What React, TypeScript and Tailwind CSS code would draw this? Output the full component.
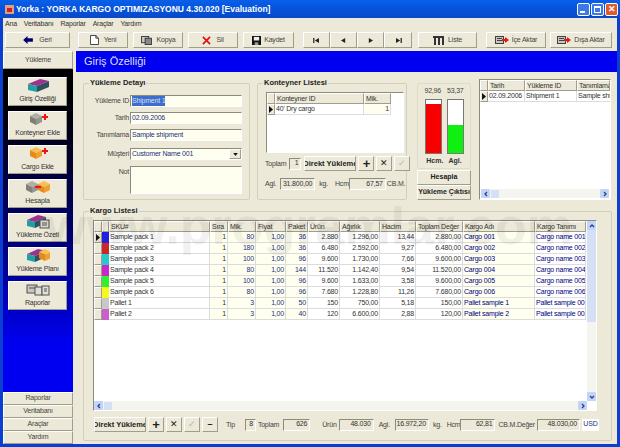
import type { ReactNode } from "react";

const raised =
  "border border-t-white border-l-white border-r-[#a09d8d] border-b-[#a09d8d] bg-[#ece9d8]";
const sunken =
  "border border-t-[#8d8b7a] border-l-[#8d8b7a] border-r-white border-b-white";

type Column = { title: string; width: number; align?: "right"; bg?: string; color?: string };

const cargoColumns: Column[] = [
  { title: "SKU#", width: 101, color: "text-[#333]" },
  { title: "Sıra", width: 18, align: "right", bg: "bg-[#fffff0]", color: "text-[#333]" },
  { title: "Mik.", width: 28, align: "right", bg: "bg-[#fffff0]", color: "text-[#223080]" },
  { title: "Fiyat", width: 30, align: "right", bg: "bg-[#fffff0]", color: "text-[#223080]" },
  { title: "Paket", width: 22, align: "right", bg: "bg-[#fffff0]", color: "text-[#223080]" },
  { title: "Ürün", width: 32, align: "right", color: "text-[#333]" },
  { title: "Ağırlık", width: 40, align: "right", color: "text-[#333]" },
  { title: "Hacim", width: 36, align: "right", color: "text-[#333]" },
  { title: "Toplam Değer", width: 47, align: "right", color: "text-[#333]" },
  { title: "Kargo Adı", width: 72, bg: "bg-[#fffff0]", color: "text-[#000080]" },
  { title: "Kargo Tanımı", width: 51, color: "text-[#000080]" },
];

const cargoRows = [
  { color: "bg-[#2020e0]", cells: ["Sample pack 1", "1", "80", "1,00", "36", "2.880", "1.296,00", "13,44", "2.880,00", "Cargo 001", "Cargo name 001"] },
  { color: "bg-[#c82828]", cells: ["Sample pack 2", "1", "180", "1,00", "36", "6.480", "2.592,00", "9,27", "6.480,00", "Cargo 002", "Cargo name 002"] },
  { color: "bg-[#28c8c8]", cells: ["Sample pack 3", "1", "100", "1,00", "96", "9.600", "1.730,00", "7,66", "9.600,00", "Cargo 003", "Cargo name 003"] },
  { color: "bg-[#c828c8]", cells: ["Sample pack 4", "1", "80", "1,00", "144", "11.520", "1.142,40", "9,54", "11.520,00", "Cargo 004", "Cargo name 004"] },
  { color: "bg-[#30f030]", cells: ["Sample pack 5", "1", "100", "1,00", "96", "9.600", "1.633,00", "3,58", "9.600,00", "Cargo 005", "Cargo name 005"] },
  { color: "bg-[#f8f820]", cells: ["Sample pack 6", "1", "80", "1,00", "96", "7.680", "1.228,80", "11,26", "7.680,00", "Cargo 006", "Cargo name 006"] },
  { color: "bg-[#c8c8c8]", cells: ["Pallet 1", "1", "3", "1,00", "50", "150", "750,00", "5,18", "150,00", "Pallet sample 1", "Pallet sample 001"] },
  { color: "bg-[#c860c8]", cells: ["Pallet 2", "1", "3", "1,00", "40", "120", "6.600,00", "2,88", "120,00", "Pallet sample 2", "Pallet sample 002"] },
];

function Box({ top, left, right, x = 0 }: { top: string; left: string; right: string; x?: number }) {
  return (
    <g transform={`translate(${x} 0)`}>
      <path d="M1 4 L7 1 L13 4 L7 7 Z" fill={top} />
      <path d="M1 4 L7 7 L7 13 L1 10 Z" fill={left} />
      <path d="M7 7 L13 4 L13 10 L7 13 Z" fill={right} />
    </g>
  );
}

function NavIcon({ kind }: { kind: string }) {
  const cls = "h-[15px] w-[24px]";
  if (kind === "giris")
    return (
      <svg viewBox="0 0 24 15" className={cls}>
        <path d="M2 6 L14 1 L23 3 L11 8 Z" fill="#a03090" />
        <path d="M2 6 L11 8 L11 14 L2 12 Z" fill="#20a0a0" />
        <path d="M11 8 L23 3 L23 9 L11 14 Z" fill="#305060" />
      </svg>
    );
  if (kind === "konteyner")
    return (
      <svg viewBox="0 0 24 15" className={cls}>
        <Box top="#b0b0a8" left="#808078" right="#949490" x={3} />
        <path d="M16 5 H22 M19 2 V8" stroke="#e81818" strokeWidth="2" />
      </svg>
    );
  if (kind === "cargo")
    return (
      <svg viewBox="0 0 24 15" className={cls}>
        <Box top="#f8c050" left="#e88820" right="#f0a030" x={3} />
        <path d="M16 5 H22 M19 2 V8" stroke="#e81818" strokeWidth="2" />
      </svg>
    );
  if (kind === "hesapla")
    return (
      <svg viewBox="0 0 24 15" className={cls}>
        <Box top="#b0b0a8" left="#808078" right="#949490" x={-1} />
        <Box top="#f8c050" left="#e88820" right="#f0a030" x={11} />
        <path d="M9 7 H15" stroke="#e81818" strokeWidth="2" />
      </svg>
    );
  if (kind === "ozet")
    return (
      <svg viewBox="0 0 24 15" className={cls}>
        <path d="M1 6 L12 1 L20 3 L9 8 Z" fill="#a03090" />
        <path d="M1 6 L9 8 L9 14 L1 12 Z" fill="#20a0a0" />
        <path d="M9 8 L20 3 L20 9 L9 14 Z" fill="#305060" />
        <rect x="14" y="6" width="9" height="8" fill="#d8d8d0" stroke="#505050" />
        <path d="M16 9 H21 M16 11 H21" stroke="#505050" />
      </svg>
    );
  if (kind === "plan")
    return (
      <svg viewBox="0 0 24 15" className={cls}>
        <path d="M1 6 L12 1 L20 3 L9 8 Z" fill="#a03090" />
        <path d="M1 6 L9 8 L9 14 L1 12 Z" fill="#20a0a0" />
        <path d="M9 8 L20 3 L20 9 L9 14 Z" fill="#305060" />
        <Box top="#f8c050" left="#e88820" right="#f0a030" x={12} />
      </svg>
    );
  return (
    <svg viewBox="0 0 24 15" className={cls}>
      <rect x="1" y="3" width="10" height="8" fill="#c8c8c0" stroke="#505050" />
      <rect x="9" y="5" width="7" height="8" fill="#e0e0d8" stroke="#505050" />
      <rect x="16" y="4" width="7" height="9" fill="#e0e0d8" stroke="#505050" />
      <path d="M3 6 H9 M18 7 H21 M18 9 H21" stroke="#505050" />
    </svg>
  );
}

function ExportIcon() {
  return (
    <svg viewBox="0 0 14 10" className="h-[10px] w-[14px]">
      <rect x="0.5" y="1.5" width="8" height="7" fill="#c8c8c0" stroke="#404040" />
      <path d="M2 3.5 H7 M2 5.5 H7" stroke="#404040" />
      <path d="M7 4 H10 V2 L14 5 L10 8 V6 H7 Z" fill="#e01818" />
    </svg>
  );
}

function ToolButton({ width, icon, label }: { width: number; icon: ReactNode; label?: string }) {
  return (
    <button
      type="button"
      style={{ width }}
      className={`${raised} flex h-[16px] items-center justify-center gap-[3px] text-[7px] text-[#444]`}
    >
      {icon}
      {label}
    </button>
  );
}

function NavGlyph({ d }: { d: string }) {
  return (
    <svg viewBox="0 0 8 6" className="h-[5px] w-[7px]">
      <path d={d} fill="#222" />
    </svg>
  );
}

function Toolbar() {
  return (
    <div className="flex h-[21px] items-start pl-[2px] pt-[2px]">
      <ToolButton
        width={65}
        label="Geri"
        icon={
          <svg viewBox="0 0 11 9" className="mr-[3px] h-[8px] w-[10px]">
            <path d="M0 4.5 L5 0 V2.5 H11 V6.5 H5 V9 Z" fill="#000070" />
          </svg>
        }
      />
      <div className="ml-[8px] flex gap-[5px]">
        <ToolButton
          width={50}
          label="Yeni"
          icon={
            <svg viewBox="0 0 10 11" className="mr-[2px] h-[10px] w-[9px]">
              <path d="M0.5 0.5 H6.5 L9.5 3.5 V10.5 H0.5 Z M6.5 0.5 V3.5 H9.5" fill="#fff" stroke="#333" />
            </svg>
          }
        />
        <ToolButton
          width={50}
          label="Kopya"
          icon={
            <svg viewBox="0 0 12 10" className="mr-[2px] h-[9px] w-[11px]">
              <rect x="0.5" y="0.5" width="8" height="7" fill="#c8c8c0" stroke="#333" />
              <rect x="4.5" y="2.5" width="7" height="7" fill="#888" stroke="#333" />
            </svg>
          }
        />
        <ToolButton
          width={50}
          label="Sil"
          icon={
            <svg viewBox="0 0 10 10" className="mr-[2px] h-[9px] w-[9px]">
              <path d="M1 1 L9 9 M9 1 L1 9" stroke="#e01010" strokeWidth="1.8" />
            </svg>
          }
        />
        <ToolButton
          width={51}
          label="Kaydet"
          icon={
            <svg viewBox="0 0 10 10" className="h-[9px] w-[9px]">
              <path d="M0 0 H10 V10 H0 Z" fill="#111" />
              <rect x="2" y="1" width="6" height="4" fill="#eee" />
              <rect x="3" y="7" width="4" height="3" fill="#999" />
            </svg>
          }
        />
      </div>
      <div className="ml-[9px] flex">
        <ToolButton width={27} icon={<NavGlyph d="M0 0 H1.5 V6 H0 Z M7 0 V6 L2 3 Z" />} />
        <ToolButton width={27} icon={<NavGlyph d="M6 0 V6 L1 3 Z" />} />
        <ToolButton width={27} icon={<NavGlyph d="M2 0 V6 L7 3 Z" />} />
        <ToolButton width={28} icon={<NavGlyph d="M1 0 V6 L6 3 Z M6.5 0 H8 V6 H6.5 Z" />} />
      </div>
      <div className="ml-[6px]">
        <ToolButton
          width={59}
          label="Liste"
          icon={
            <svg viewBox="0 0 11 9" className="mr-[1px] h-[9px] w-[11px]">
              <path d="M0 0 H11 V2 H0 Z M1 2 H3 V9 H1 Z M5 2 H7 V9 H5 Z M9 2 H11 V9 H9 Z" fill="#333" />
            </svg>
          }
        />
      </div>
      <div className="ml-[9px]">
        <ToolButton width={60} label="İçe Aktar" icon={<ExportIcon />} />
      </div>
      <div className="ml-[4px]">
        <ToolButton width={62} label="Dışa Aktar" icon={<ExportIcon />} />
      </div>
    </div>
  );
}

function Sidebar() {
  const items = [
    { kind: "giris", label: "Giriş Özelliği" },
    { kind: "konteyner", label: "Konteyner Ekle" },
    { kind: "cargo", label: "Cargo Ekle" },
    { kind: "hesapla", label: "Hesapla" },
    { kind: "ozet", label: "Yükleme Özeti" },
    { kind: "plan", label: "Yükleme Planı" },
    { kind: "raporlar", label: "Raporlar" },
  ];
  return (
    <div className="flex w-[70px] shrink-0 flex-col">
      <div className={`${raised} flex h-[18px] items-center justify-center text-[7px] text-[#444]`}>Yükleme</div>
      <div className="flex flex-1 flex-col gap-[5px] bg-gradient-to-b from-black via-[#000090] via-60% to-[#0000f0] to-85% pl-[5px] pt-[8px]">
        {items.map((item) => (
          <button
            key={item.kind}
            type="button"
            className={`${raised} flex h-[29px] w-[59px] flex-col items-center justify-between pb-[1px] text-[7px] leading-[10px] text-[#333]`}
          >
            <NavIcon kind={item.kind} />
            {item.label}
          </button>
        ))}
      </div>
      {["Raporlar", "Veritabanı", "Araçlar", "Yardım"].map((label) => (
        <div key={label} className={`${raised} flex h-[13px] items-center justify-center text-[7px] text-[#444]`}>
          {label}
        </div>
      ))}
    </div>
  );
}

function Group({ title, className, children }: { title: string; className: string; children: ReactNode }) {
  return (
    <div className={`relative shrink-0 rounded-[2px] border border-[#d2cfbd] ${className}`}>
      <span className="absolute left-[5px] top-[-6px] bg-[#ece9d8] px-[1px] text-[7.5px] font-bold leading-[10px] tracking-normal text-[#222]">
        {title}
      </span>
      {children}
    </div>
  );
}

function Field({ label, value, height = 12, selected, combo, mt }: {
  label: string;
  value?: string;
  height?: number;
  selected?: boolean;
  combo?: boolean;
  mt: string;
}) {
  return (
    <div className={`flex ${mt}`}>
      <span className="w-[46px] pr-[1px] pt-[1px] text-right text-[7px] leading-[10px] text-[#444]">{label}</span>
      <div
        style={{ height }}
        className={`${sunken} flex w-[112px] items-center justify-between bg-[#fffff0] pl-[1px] text-[7px] text-[#223080]`}
      >
        {selected ? <span className="bg-[#3a6fd0] text-[#dde]">{value}</span> : <span>{value}</span>}
        {combo && (
          <span className={`${raised} flex h-[10px] w-[12px] items-center justify-center`}>
            <svg viewBox="0 0 6 4" className="h-[3px] w-[5px]">
              <path d="M0 0 H6 L3 4 Z" fill="#111" />
            </svg>
          </span>
        )}
      </div>
    </div>
  );
}

function SmallBtn({ children, muted }: { children: ReactNode; muted?: boolean }) {
  return (
    <button
      type="button"
      className={`${raised} flex h-[15px] w-[16px] items-center justify-center text-[9px] font-bold leading-none ${muted ? "text-[#c8c6b8]" : "text-[#222]"}`}
    >
      {children}
    </button>
  );
}

function ActionButtons({ width }: { width: number }) {
  return (
    <>
      <button
        type="button"
        style={{ width }}
        className={`${raised} flex h-[15px] items-center justify-center overflow-hidden whitespace-nowrap text-[7.5px] font-bold tracking-normal text-[#222]`}
      >
        Direkt Yükleme
      </button>
      <SmallBtn>
        <span className="text-[13px]">+</span>
      </SmallBtn>
      <SmallBtn>
        <span className="font-normal">✕</span>
      </SmallBtn>
      <SmallBtn muted>✓</SmallBtn>
    </>
  );
}

function ReadOut({ value, width, className = "" }: { value: string; width: number; className?: string }) {
  return (
    <div
      style={{ width }}
      className={`${sunken} flex h-[12px] shrink-0 items-center justify-end pr-[2px] text-[7px] text-[#333] ${className}`}
    >
      {value}
    </div>
  );
}

function Label({ children, className = "" }: { children: ReactNode; className?: string }) {
  return <span className={`shrink-0 text-[7px] leading-[10px] text-[#444] ${className}`}>{children}</span>;
}

function HeaderCell({ title, width }: { title: string; width: number }) {
  return (
    <div
      style={{ width }}
      className={`${raised} h-full shrink-0 overflow-hidden whitespace-nowrap border-r-[#666] border-b-[#444] pl-[1px] text-[7px] leading-[9px] text-[#333]`}
    >
      {title}
    </div>
  );
}

function Indicator({ active }: { active?: boolean }) {
  return (
    <div className={`${raised} flex h-full w-[8px] shrink-0 items-center justify-center`}>
      {active && (
        <svg viewBox="0 0 4 7" className="h-[7px] w-[4px]">
          <path d="M0 0 L4 3.5 L0 7 Z" fill="#111" />
        </svg>
      )}
    </div>
  );
}

function ScrollBtn({ d }: { d: string }) {
  return (
    <div className="flex h-[9px] w-[9px] shrink-0 items-center justify-center rounded-[1px] bg-[#c3d4f7]">
      <svg viewBox="0 0 6 6" className="h-[6px] w-[6px]">
        <path d={d} fill="none" stroke="#27408b" strokeWidth="1.3" />
      </svg>
    </div>
  );
}

function HScroll({ width }: { width: number }) {
  return (
    <div style={{ width }} className="flex h-[9px] items-center bg-[#f5f5f0]">
      <ScrollBtn d="M4 1 L2 3 L4 5" />
      <div className="ml-[1px] h-[8px] w-[8px] bg-[#d6e0f5]" />
      <div className="flex-1" />
      <ScrollBtn d="M2 1 L4 3 L2 5" />
    </div>
  );
}

function Details() {
  return (
    <Group title="Yükleme Detayı" className="mt-[4px] h-[117px] w-[167px]">
      <div className="pt-[1px]">
        <Field mt="mt-[10px]" label="Yükleme ID" value="Shipment 1" selected />
        <Field mt="mt-[5px]" label="Tarih" value="02.09.2006" />
        <Field mt="mt-[5px]" label="Tanımlama" value="Sample shipment" />
        <Field mt="mt-[7px]" label="Müşteri" value="Customer Name 001" combo />
        <Field mt="mt-[6px]" label="Not" height={28} />
      </div>
    </Group>
  );
}

function Containers() {
  return (
    <Group title="Konteyner Listesi" className="ml-[7px] mt-[4px] h-[117px] w-[150px]">
      <div className={`${sunken} ml-[8px] mt-[8px] h-[61px] w-[138px] bg-white`}>
        <div className="flex h-[11px]">
          <Indicator />
          <HeaderCell title="Konteyner ID" width={89} />
          <HeaderCell title="Mik." width={27} />
        </div>
        <div className="flex h-[11px] text-[7px] leading-[10px] text-[#333]">
          <Indicator active />
          <div className="w-[89px] border-b border-r border-[#ddd] pl-[1px]">40' Dry cargo</div>
          <div className="w-[27px] border-b border-r border-[#ddd] bg-[#fffff0] pr-[1px] text-right">1</div>
        </div>
      </div>
      <div className="ml-[7px] mt-[3px] flex items-center">
        <Label>Toplam</Label>
        <ReadOut value="1" width={12} className="ml-[3px] mr-[3px]" />
        <div className="flex gap-[2px]">
          <ActionButtons width={52} />
        </div>
      </div>
      <div className="ml-[7px] mt-[7px] flex items-center">
        <Label>Agl.</Label>
        <ReadOut value="31.800,00" width={35} className="ml-[4px]" />
        <Label className="ml-[4px]">kg.</Label>
        <Label className="ml-[7px]">Hcm</Label>
        <ReadOut value="67,57" width={37} />
        <Label className="ml-[1px]">CB.M.</Label>
      </div>
    </Group>
  );
}

function Gauge({ fill, color }: { fill: number; color: string }) {
  return (
    <div className="flex h-[55px] w-[17px] flex-col justify-end border border-[#777] bg-white">
      <div style={{ height: `${fill}%` }} className={color} />
    </div>
  );
}

function Gauges() {
  return (
    <div className="ml-[10px] mt-[4px] w-[57px] shrink-0">
      <div className="h-[86px] w-[54px] rounded-[2px] border border-[#dedbcb]">
        <div className="mt-[2px] flex justify-center gap-[6px] text-[7px] leading-[10px] text-[#444]">
          <span>92,96</span>
          <span>53,37</span>
        </div>
        <div className="mt-[3px] flex justify-center gap-[5px]">
          <Gauge fill={93} color="bg-[#f80000]" />
          <Gauge fill={53} color="bg-[#10f010]" />
        </div>
        <div className="mt-[2px] flex justify-center gap-[5px] text-[7px] font-bold leading-[10px] tracking-normal text-[#333]">
          <span>Hcm.</span>
          <span>Agl.</span>
        </div>
      </div>
      <button type="button" className={`${raised} mt-[1px] block h-[15px] w-[54px] text-[7px] font-bold tracking-normal text-[#222]`}>
        Hesapla
      </button>
      <button type="button" className={`${raised} block h-[15px] w-[54px] overflow-hidden whitespace-nowrap text-[7px] font-bold tracking-normal text-[#222]`}>
        Yükleme Çıktısı
      </button>
    </div>
  );
}

function ShipmentGrid() {
  return (
    <div className={`${sunken} ml-[5px] flex h-[121px] w-[132px] shrink-0 flex-col justify-between bg-white`}>
      <div className="overflow-hidden">
        <div className="flex h-[11px]">
          <Indicator />
          <HeaderCell title="Tarih" width={37} />
          <HeaderCell title="Yükleme ID" width={52} />
          <HeaderCell title="Tanımlama" width={33} />
        </div>
        <div className="flex h-[11px] whitespace-nowrap text-[7px] leading-[10px] text-[#333]">
          <Indicator active />
          <div className="w-[37px] shrink-0 border-b border-r border-[#ddd] pl-[1px]">02.09.2006</div>
          <div className="w-[52px] shrink-0 border-b border-r border-[#ddd] pl-[1px]">Shipment 1</div>
          <div className="w-[33px] shrink-0 overflow-hidden border-b border-[#ddd] pl-[1px]">Sample shipment</div>
        </div>
      </div>
      <div className="mb-[1px] flex justify-center">
        <HScroll width={128} />
      </div>
    </div>
  );
}

function CargoGrid() {
  return (
    <div className={`${sunken} ml-[9px] mt-[8px] flex h-[191px] w-[504px] flex-col bg-white`}>
      <div className="flex flex-1 overflow-hidden">
        <div className="w-[492px] shrink-0 overflow-hidden">
          <div className="flex h-[11px]">
            <Indicator />
            <div className={`${raised} h-full w-[7px] shrink-0`} />
            {cargoColumns.map((col) => (
              <HeaderCell key={col.title} title={col.title} width={col.width} />
            ))}
          </div>
          {cargoRows.map((row, rowIndex) => (
            <div key={row.cells[0]} className="flex h-[11px] whitespace-nowrap text-[7px] leading-[10px]">
              <Indicator active={rowIndex === 0} />
              <div className={`h-full w-[7px] shrink-0 ${row.color}`} />
              {row.cells.map((cell, i) => {
                const col = cargoColumns[i];
                return (
                  <div
                    key={col.title}
                    style={{ width: col.width }}
                    className={`shrink-0 overflow-hidden border-b border-r border-[#dcdcdc] px-[1px] ${col.align === "right" ? "text-right" : ""} ${col.bg ?? ""} ${col.color ?? ""}`}
                  >
                    {cell}
                  </div>
                );
              })}
            </div>
          ))}
        </div>
        <div className="ml-[1px] flex w-[9px] shrink-0 flex-col bg-[#f5f5f0]">
          <ScrollBtn d="M1 4 L3 2 L5 4" />
          <div className="h-[92px] bg-[#d6e0f5]" />
          <div className="flex-1" />
          <ScrollBtn d="M1 2 L3 4 L5 2" />
        </div>
      </div>
      <HScroll width={493} />
    </div>
  );
}

function CargoFooter() {
  return (
    <div className="ml-[10px] mt-[6px] flex items-center">
      <div className="flex gap-[2px]">
        <ActionButtons width={52} />
        <SmallBtn>
          <span>–</span>
        </SmallBtn>
      </div>
      <Label className="ml-[8px]">Tip</Label>
      <ReadOut value="8" width={11} className="ml-[10px]" />
      <Label className="ml-[2px]">Toplam</Label>
      <ReadOut value="626" width={27} className="ml-[4px]" />
      <Label className="ml-[12px]">Ürün</Label>
      <ReadOut value="48.030" width={35} className="ml-[2px]" />
      <Label className="ml-[5px]">Agl.</Label>
      <ReadOut value="16.972,20" width={34} className="ml-[5px]" />
      <Label className="ml-[4px]">kg.</Label>
      <Label className="ml-[5px]">Hcm</Label>
      <ReadOut value="62,81" width={35} />
      <Label className="ml-[3px]">CB.M.Değer</Label>
      <ReadOut value="48.030,00" width={43} className="ml-[2px]" />
      <div className="ml-[2px] flex h-[12px] w-[17px] items-center justify-center bg-white text-[7px] text-[#223080]">
        USD
      </div>
    </div>
  );
}

export default function App() {
  return (
    <div className="relative flex h-[447px] w-[620px] flex-col overflow-hidden bg-[#0a3fd0] font-['Liberation_Sans',sans-serif] tracking-[-0.2px]">
      <div className="flex h-[18px] shrink-0 items-center bg-gradient-to-b from-[#0a5fe8] via-[#0453dc] to-[#0a48c8] pl-[5px] pr-[2px]">
        <svg viewBox="0 0 9 9" className="h-[9px] w-[9px]">
          <rect width="9" height="9" fill="#e0a080" />
          <rect x="2" y="3" width="5" height="4" fill="#d02020" />
        </svg>
        <span className="ml-[2px] flex-1 text-[8.5px] font-bold tracking-normal text-white">
          Yorka : YORKA KARGO OPTIMIZASYONU 4.30.020 [Evaluation]
        </span>
        <div className="flex gap-[1px]">
          <div className="flex h-[13px] w-[13px] items-end rounded-[2px] border border-white bg-[#3c78e8] pb-[2px] pl-[2px]">
            <div className="h-[2px] w-[5px] bg-white" />
          </div>
          <div className="flex h-[13px] w-[13px] items-center justify-center rounded-[2px] border border-white bg-[#3c78e8]">
            <div className="h-[7px] w-[7px] border border-t-2 border-white" />
          </div>
          <div className="flex h-[13px] w-[13px] items-center justify-center rounded-[2px] border border-white bg-[#e05a30] text-[9px] font-bold leading-none text-white">
            ✕
          </div>
        </div>
      </div>
      <div className="mx-[3px] mb-[3px] flex min-h-0 flex-1 flex-col bg-[#ece9d8]">
        <div className="flex h-[12px] shrink-0 items-center gap-[7px] pl-[2px] text-[7px] text-[#333]">
          <span>Ana</span>
          <span>Veritabanı</span>
          <span>Raporlar</span>
          <span>Araçlar</span>
          <span>Yardım</span>
        </div>
        <Toolbar />
        <div className="flex min-h-0 flex-1">
          <Sidebar />
          <div className="ml-[3px] flex min-w-0 flex-1 flex-col">
            <div className="flex h-[21px] shrink-0 items-center bg-[#0000f0] pl-[8px] text-[11px] tracking-normal text-[#dde]">
              Giriş Özelliği
            </div>
            <div className="flex pl-[7px] pt-[7px]">
              <Details />
              <Containers />
              <Gauges />
              <ShipmentGrid />
            </div>
            <div className="pl-[7px] pt-[11px]">
              <Group title="Kargo Listesi" className="h-[230px] w-[529px]">
                <CargoGrid />
                <CargoFooter />
              </Group>
            </div>
          </div>
        </div>
      </div>
      <div className="pointer-events-none absolute left-[46px] top-[196px] whitespace-nowrap text-[52px] font-bold leading-[60px] tracking-normal text-black opacity-[0.05]">
        www.programlar.com
      </div>
    </div>
  );
}
